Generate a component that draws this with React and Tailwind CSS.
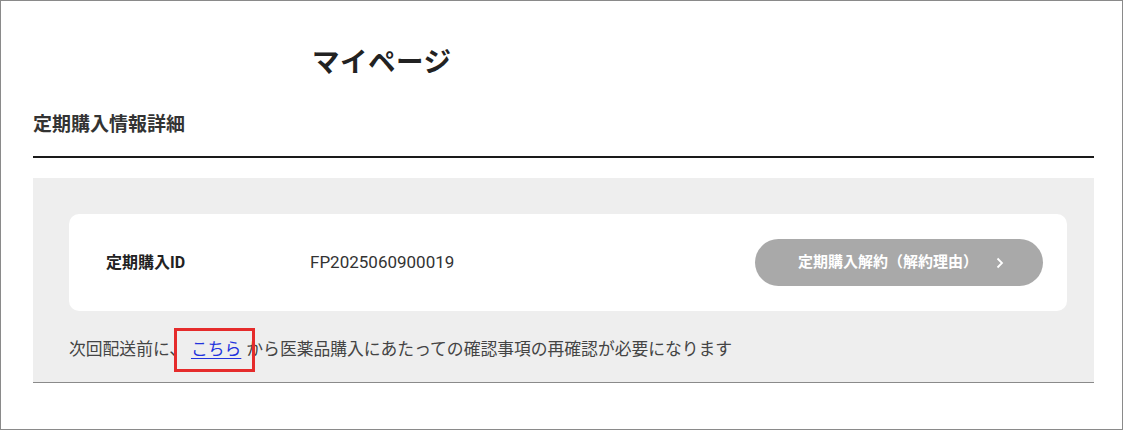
import React from 'react';

const MyPage = () => {
  const subscriptionId = 'FP2025060900019';

  return (
    <div className="w-[1123px] h-[430px] border border-[#8a8a8a] bg-white text-[#333] font-['Roboto','Noto_Sans_CJK_JP',sans-serif]">
      <h1 className="pl-[311px] pt-[43px] text-[27.5px] leading-[38px] font-bold tracking-[0.5px] text-[#222]">
        マイページ
      </h1>

      <div className="pl-[32px] pr-[28px] mt-[30px]">
        <div className="border-b-2 border-[#1a1a1a] pb-[18px]">
          <h2 className="text-[19px] leading-[26px] font-bold text-[#333]">定期購入情報詳細</h2>
        </div>

        <div className="mt-[20px] bg-[#eeeeee] border-b border-[#8a8a8a] pl-[36px] pr-[27px] pt-[36px] pb-[21px]">
          <div className="bg-white rounded-[10px] h-[97px] flex items-center pl-[37px] pr-[24px]">
            <div className="w-[204px] text-[16px] font-bold text-[#222]">定期購入ID</div>
            <div className="text-[17px] text-[#333]">{subscriptionId}</div>
            <button className="ml-auto w-[288px] h-[47px] rounded-full bg-[#a9a9a9] text-white text-[15px] font-bold flex items-center justify-center gap-[18px] pl-[4px]">
              <span>定期購入解約（解約理由）</span>
              <svg width="8" height="12" viewBox="0 0 8 12" fill="none" stroke="currentColor" strokeWidth="1.8">
                <path d="M1.5 1.5 6 6l-4.5 4.5" />
              </svg>
            </button>
          </div>

          <p className="mt-[26px] text-[16.8px] leading-[24px] text-[#444]">
            次回配送前に、
            <span className="relative inline-block mx-[5px]">
              <a href="#" className="text-[#2233dd] underline underline-offset-[3px]">こちら</a>
              <span className="absolute left-[-17px] top-[-9px] w-[81px] h-[44px] border-[3px] border-[#e52b2b] pointer-events-none"></span>
            </span>
            から医薬品購入にあたっての確認事項の再確認が必要になります
          </p>
        </div>
      </div>
    </div>
  );
};

export default MyPage;
